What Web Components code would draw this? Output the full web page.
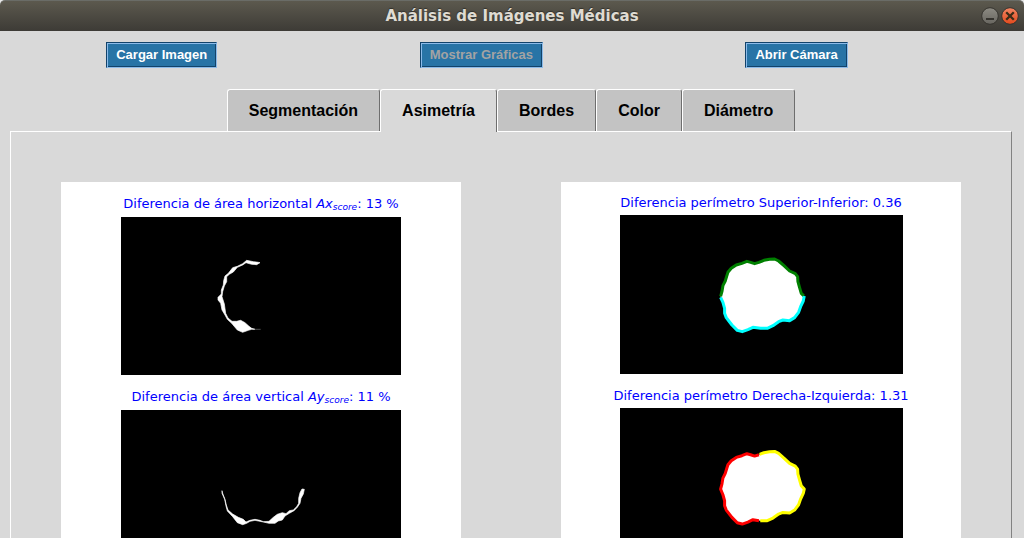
<!DOCTYPE html>
<html lang="es">
<head>
<meta charset="utf-8">
<meta name="viewport" content="width=device-width, initial-scale=1">
<title>Análisis de Imágenes Médicas</title>
<style>
html, body { margin: 0; height: 100%; overflow: hidden; background: #d9d9d9; }
body { font-family: "Liberation Sans", Arial, sans-serif; }
</style>
</head>
<body>
<app-window heading="Análisis de Imágenes Médicas">
  <tool-bar>
    <tool-button>Cargar Imagen</tool-button>
    <tool-button disabled>Mostrar Gráficas</tool-button>
    <tool-button>Abrir Cámara</tool-button>
  </tool-bar>
  <tab-book>
    <tab-item slot="tab">Segmentación</tab-item>
    <tab-item slot="tab" active>Asimetría</tab-item>
    <tab-item slot="tab">Bordes</tab-item>
    <tab-item slot="tab">Color</tab-item>
    <tab-item slot="tab">Diámetro</tab-item>
    <figure-canvas kind="area">
      <plot-figure shape="horizontal">Diferencia de área horizontal <math-symbol base="Ax" sub="score"></math-symbol>: 13 %</plot-figure>
      <plot-figure shape="vertical">Diferencia de área vertical <math-symbol base="Ay" sub="score"></math-symbol>: 11 %</plot-figure>
    </figure-canvas>
    <figure-canvas kind="perimeter">
      <plot-figure shape="top-bottom">Diferencia perímetro Superior-Inferior: 0.36</plot-figure>
      <plot-figure shape="left-right">Diferencia perímetro Derecha-Izquierda: 1.31</plot-figure>
    </figure-canvas>
  </tab-book>
</app-window>

<script>
const define = (name, render) => customElements.define(name, class extends HTMLElement {
  connectedCallback() {
    if (!this.shadowRoot) this.attachShadow({ mode: "open" }).innerHTML = render(this);
  }
});

define("app-window", el => `
<style>
:host { display: flex; flex-direction: column; height: 100%; overflow: hidden; background: #d9d9d9; }
.back { background: #e8e8e8; }
header { display: grid; grid-template-columns: 1fr auto 1fr; align-items: center; height: 31px;
  box-sizing: border-box; border-top: 1px solid #6a6c67; border-radius: 5px 5px 0 0;
  background: linear-gradient(#5c594e, #3d3b36); padding: 0 4px; }
h1 { grid-column: 2; margin: 0; font: bold 15px/30px "DejaVu Sans", sans-serif; color: #dfdbd2;
  text-shadow: 0 -1px 1px #33312c; }
nav { display: flex; justify-content: flex-end; gap: 0; }
nav button { width: 20px; height: 20px; padding: 0; border: 0; background: none; }
svg { display: block; }
main { flex: 1; min-height: 0; overflow: hidden; }
</style>
<div class="back"><header>
  <h1>${el.getAttribute("heading")}</h1>
  <nav>
    <button aria-label="Minimizar"><svg width="20" height="20" viewBox="0 0 20 20">
      <defs><linearGradient id="g" x1="0" y1="0" x2="0" y2="1"><stop offset="0" stop-color="#8d8b83"/><stop offset="1" stop-color="#67655f"/></linearGradient></defs>
      <circle cx="10" cy="10" r="8.3" fill="url(#g)" stroke="#35332e"/>
      <path d="M6 13h8" stroke="#35332e" stroke-width="2"/></svg></button>
    <button aria-label="Cerrar"><svg width="20" height="20" viewBox="0 0 20 20">
      <defs><linearGradient id="r" x1="0" y1="0" x2="0" y2="1"><stop offset="0" stop-color="#f58663"/><stop offset="1" stop-color="#e2491c"/></linearGradient></defs>
      <circle cx="10" cy="10" r="8.3" fill="url(#r)" stroke="#35332e"/>
      <path d="M6.2 6.2l7.6 7.6M13.8 6.2l-7.6 7.6" stroke="#3c2c18" stroke-width="2.3"/></svg></button>
  </nav>
</header></div>
<main><slot></slot></main>`);

define("tool-bar", () => `
<style>
:host { display: flex; justify-content: space-around; padding: 11px 75px 21px 5px; }
</style><slot></slot>`);

define("tool-button", el => `
<style>
:host { display: block; }
button { display: block; height: 26px; padding: 0 9px; margin: 0; border: 1px solid; border-radius: 0;
  border-color: #12436a #8cbbe9 #8cbbe9 #12436a;
  box-shadow: inset 1px 1px #8cbbe9, inset -1px -1px #12436a;
  background: #2874a6; color: #fff; font: bold 13px/24px "Liberation Sans", Arial, sans-serif; }
button:disabled { color: #a3a3a3; }
</style><button${el.hasAttribute("disabled") ? " disabled" : ""}><slot></slot></button>`);

define("tab-book", () => `
<style>
:host { display: block; margin: 0 12px 0 10px; }
.tabs { display: flex; justify-content: center; }
.panel { display: grid; grid-template-columns: 1fr 1fr; border: 1px solid; border-color: #fff #828282 #828282 #fff;
  padding: 50px 0; }
</style>
<div class="tabs" role="tablist"><slot name="tab"></slot></div>
<div class="panel" role="tabpanel"><slot></slot></div>`);

define("tab-item", el => `
<style>
:host { display: block; position: relative; }
button { display: block; box-sizing: border-box; height: 42px; margin: 0; padding: 0 21px; border: 1px solid;
  border-color: #fff #6e6e6e transparent #fff; border-bottom: 0; border-radius: 3px 3px 0 0;
  background: #c3c3c3; color: #000; font: bold 16px/40px "Liberation Sans", Arial, sans-serif; }
:host([active]) button { height: 43px; margin-bottom: -1px; padding-bottom: 1px; background: #d9d9d9; }
</style><button role="tab" aria-selected="${el.hasAttribute("active")}"><slot></slot></button>`);

define("figure-canvas", () => `
<style>
:host { display: flex; flex-direction: column; margin: 0 50px; min-height: 400px; background: #fff;
  --caption: 35px; --line: 43px; --plot: 158px; }
:host([kind="perimeter"]) { gap: 1px; --caption: 33px; --line: 41px; --plot: 159px; --inset: 0 58px 0 59px; }
</style><slot></slot>`);

define("math-symbol", el => `
<style>
:host { display: inline; font-style: italic; }
sub { font-size: 9px; line-height: 0; vertical-align: -2px; }
</style>${el.getAttribute("base")}<sub>${el.getAttribute("sub")}</sub>`);

const TOP = "M48 154L52 140L55 122L62 108L66 95L70 82L80 70L95 60L112 55L127 49L138 52L150 56L163 52L178 46L195 43L210 42L222 48L238 62L255 78L272 86L279 95L280 110L285 128L290 145L298 153";
const BOTTOM = "M299 153L296 168L288 185L282 202L270 218L255 227L235 225L222 230L205 242L188 250L168 250L145 247L130 254L113 260L98 256L82 240L65 218L60 205L60 190L55 172L48 157";
const LEFT = "M163 250L145 247L130 254L113 260L98 256L82 240L65 218L60 205L60 190L55 172L48 155L52 140L55 122L62 108L66 95L70 82L80 70L95 60L112 55L127 49L138 52L150 56L163 52";
const RIGHT = "M165 51L178 46L195 43L210 42L222 48L238 62L255 78L272 86L279 95L280 110L285 128L290 145L299 155L296 168L288 185L282 202L270 218L255 227L235 225L222 230L205 242L188 250L167 250";
const BLOB = TOP + BOTTOM.replace("M", "L") + "Z";
const outline = (y, a, ca, b, cb) => `<g transform="translate(84.6 ${y}) scale(.3333)" fill="none" stroke-width="9" stroke-linejoin="round">
  <path d="${BLOB}" fill="#fff"/><path d="${a}" stroke="${ca}"/><path d="${b}" stroke="${cb}"/></g>`;
const SHAPES = {
  "horizontal": `<path transform="translate(79 33) scale(.3333)" fill="#fff" stroke="#fff" stroke-width="2" d="M180 38L170 44L155 43L138 38L128 45L112 52L100 66L88 73L80 80L80 95L73 108L68 125L66 140L73 162L77 190L84 204L96 214L110 214L122 211L135 218L147 229L155 235L165 238L155 238L145 241L128 247L112 240L95 220L82 208L75 195L66 180L62 160L54 150V142L64 132V120L70 105L71 92L75 78L85 70L98 53L112 49L128 41L140 31L160 35L175 37Z"/>
    <path transform="translate(79 33) scale(.3333)" stroke="#777" stroke-width="2" d="M163 238H182"/>`,
  "vertical": `<path transform="translate(79 60) scale(.3333)" fill="#fff" stroke="#fff" stroke-width="2" d="M66 62L68 70L75 88L79 105L84 120L98 132L115 142L130 148L138 156L150 151L165 148L180 151L190 155L207 154L220 142L232 133L247 128L258 131L268 122L280 120L290 110L296 100V85L300 68L306 57L313 58L310 72L303 85L300 100L292 112L282 122L268 130L255 138L247 150L235 153L225 160L207 160L190 156L165 151L150 154L140 160L128 164L112 158L98 140L82 123L78 108L74 88L66 70Z"/>`,
  "top-bottom": outline(30, TOP, "#008000", BOTTOM, "#00ffff"),
  "left-right": outline(29.4, LEFT, "#ff0000", RIGHT, "#ffff00")
};

define("plot-figure", el => `
<style>
:host { display: block; }
figure { margin: 0; }
figcaption { height: var(--caption); text-align: center; white-space: nowrap; color: #00f;
  font: 13px/var(--line) "DejaVu Sans", sans-serif; }
.plot { margin: var(--inset, 0 60px); height: var(--plot); background: #000; }
svg { display: block; overflow: visible; }
</style>
<figure><figcaption><slot></slot></figcaption>
<div class="plot"><svg width="280" height="158" aria-hidden="true">${SHAPES[el.getAttribute("shape")]}</svg></div></figure>`);
</script>
</body>
</html>
